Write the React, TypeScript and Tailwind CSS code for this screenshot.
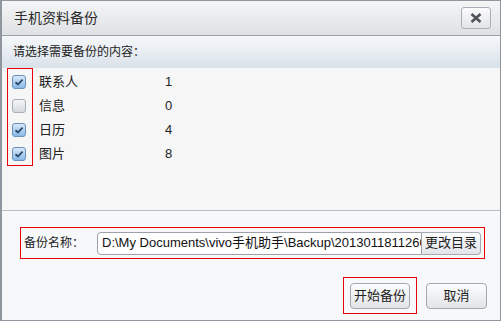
const items = [
  { name: "联系人", count: 1, checked: true },
  { name: "信息", count: 0, checked: false },
  { name: "日历", count: 4, checked: true },
  { name: "图片", count: 8, checked: true },
];

const font = { fontFamily: '"Liberation Sans", "Noto Sans CJK SC", sans-serif' };

function CheckBox({ checked }: { checked: boolean }) {
  if (!checked) {
    return (
      <span className="block h-[14px] w-[14px] rounded-[3px] border border-[#a7aeb6] bg-gradient-to-b from-[#f4f5f7] to-[#d5dae0]" />
    );
  }
  return (
    <span className="flex h-[14px] w-[14px] items-center justify-center rounded-[3px] border border-[#6a91bb] bg-gradient-to-b from-[#d8e9fa] to-[#8ab9e8]">
      <svg width="10" height="8" viewBox="0 0 10 8">
        <path d="M1.5 4.2 L4 6.4 L8.6 1.6" fill="none" stroke="#2c4a6b" strokeWidth="1.8" />
      </svg>
    </span>
  );
}

function GrayButton({ label, className }: { label: string; className?: string }) {
  return (
    <button
      className={
        "flex shrink-0 items-center justify-center border border-[#a3aab2] bg-gradient-to-b from-[#fdfdfd] to-[#e1e4e8] text-[13px] text-[#222] " +
        (className ?? "")
      }
    >
      {label}
    </button>
  );
}

export default function App() {
  return (
    <div className="h-[322px] w-[502px] bg-white" style={font}>
      <div className="relative flex h-[321px] w-[501px] flex-col border border-l-2 border-[#8f969d] bg-[#f7f8f9]">
        <div className="flex h-[35px] items-center justify-between border-b border-[#98a1aa] bg-gradient-to-b from-[#f4f5f6] to-[#dfe1e4] pl-[12px] pr-[9px]">
          <span className="text-[14px] text-[#2b2b2b]">手机资料备份</span>
          <button className="flex h-[22px] w-[30px] items-center justify-center rounded-[3px] border border-[#a9afb5] bg-gradient-to-b from-[#fbfbfc] to-[#e2e4e7]">
            <svg width="12" height="10" viewBox="0 0 12 10">
              <path d="M1.5 1 L10.5 9 M10.5 1 L1.5 9" stroke="#4f545a" strokeWidth="2.6" />
            </svg>
          </button>
        </div>
        <div className="flex h-[32px] items-center bg-gradient-to-b from-[#f6f8fa] to-[#d9e2e9] pl-[11px] text-[12px] text-[#222]">
          请选择需要备份的内容：
        </div>
        <div className="relative h-[143px] border-b border-[#b9bec5] bg-[#f6f6f6] pt-[2px]">
          {items.map((item) => (
            <div key={item.name} className="flex h-[24px] items-center text-[13px] text-[#222]">
              <span className="ml-[10px] w-[27px]">
                <CheckBox checked={item.checked} />
              </span>
              <span className="w-[126px]">{item.name}</span>
              <span>{item.count}</span>
            </div>
          ))}
          <div className="absolute left-[5px] top-0 h-[98px] w-[26px] border border-[#e8000b]" />
        </div>
        <div className="flex flex-1 flex-col pl-[18px] pr-[13px] pt-[16px]">
          <div className="flex h-[32px] w-[465px] items-center border border-[#e8000b] pl-[3px]">
            <span className="w-[73px] shrink-0 text-[12px] text-[#222]">备份名称：</span>
            <div className="flex h-[23px] min-w-0 flex-1 pr-[3px]">
              <input
                readOnly
                value="D:\My Documents\vivo手机助手\Backup\20130118112609"
                className="min-w-0 flex-1 rounded-l-[4px] border border-[#9aa1a9] bg-white pl-[4px] text-[13px] text-[#111] outline-none"
              />
              <GrayButton label="更改目录" className="w-[59px] rounded-r-[4px] border-l-0" />
            </div>
          </div>
          <div className="mt-[18px] flex justify-end gap-[9px]">
            <div className="flex h-[37px] w-[74px] items-center justify-center border border-[#e8000b]">
              <GrayButton label="开始备份" className="h-[26px] w-[60px] rounded-[4px]" />
            </div>
            <div className="flex h-[37px] items-center">
              <GrayButton label="取消" className="h-[26px] w-[61px] rounded-[4px]" />
            </div>
          </div>
        </div>
      </div>
    </div>
  );
}
